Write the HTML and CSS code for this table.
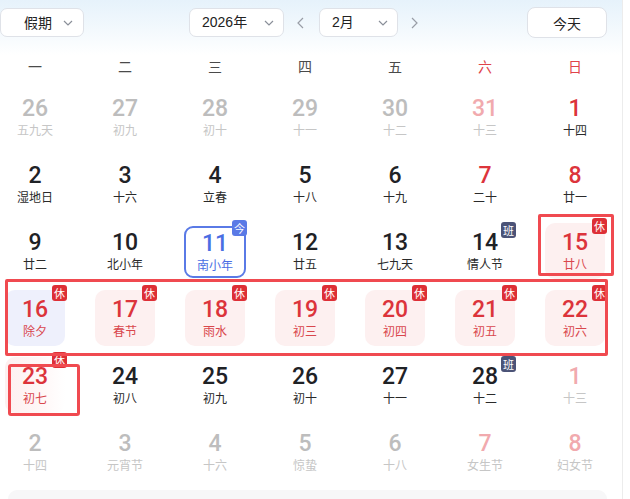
FILE: index.html
```html
<!DOCTYPE html>
<html lang="zh">
<head>
<meta charset="utf-8">
<link rel="stylesheet" href="styles.css">
</head>
<body>
<div class="app">
  <div class="toolbar">
    <div class="select holiday"><span>假期</span><svg class="chev" viewBox="0 0 10 6"><path d="M1 1l4 4 4-4"/></svg></div>
    <div class="select year"><span>2026年</span><svg class="chev" viewBox="0 0 10 6"><path d="M1 1l4 4 4-4"/></svg></div>
    <div class="arrow prev"><svg viewBox="0 0 7 12"><path d="M6 1L1 6l5 5"/></svg></div>
    <div class="select month"><span>2月</span><svg class="chev" viewBox="0 0 10 6"><path d="M1 1l4 4 4-4"/></svg></div>
    <div class="arrow next"><svg viewBox="0 0 7 12"><path d="M1 1l5 5-5 5"/></svg></div>
    <div class="spacer"></div>
    <div class="today-btn">今天</div>
  </div>

  <div class="weekdays">
    <div>一</div><div>二</div><div>三</div><div>四</div><div>五</div><div class="we">六</div><div class="we">日</div>
  </div>

  <div class="grid">
    <div class="cell other"><b>26</b><i>五九天</i></div>
    <div class="cell other"><b>27</b><i>初九</i></div>
    <div class="cell other"><b>28</b><i>初十</i></div>
    <div class="cell other"><b>29</b><i>十一</i></div>
    <div class="cell other"><b>30</b><i>十二</i></div>
    <div class="cell other wk"><b>31</b><i>十三</i></div>
    <div class="cell red"><b>1</b><i>十四</i></div>

    <div class="cell"><b>2</b><i>湿地日</i></div>
    <div class="cell"><b>3</b><i>十六</i></div>
    <div class="cell"><b>4</b><i>立春</i></div>
    <div class="cell"><b>5</b><i>十八</i></div>
    <div class="cell"><b>6</b><i>十九</i></div>
    <div class="cell red"><b>7</b><i>二十</i></div>
    <div class="cell red"><b>8</b><i>廿一</i></div>

    <div class="cell"><b>9</b><i>廿二</i></div>
    <div class="cell"><b>10</b><i>北小年</i></div>
    <div class="cell today"><b>11</b><i>南小年</i><span class="badge jin">今</span></div>
    <div class="cell"><b>12</b><i>廿五</i></div>
    <div class="cell"><b>13</b><i>七九天</i></div>
    <div class="cell"><b>14</b><i>情人节</i><span class="badge ban">班</span></div>
    <div class="cell rest"><b>15</b><i>廿八</i><span class="badge xiu">休</span></div>

    <div class="cell rest selected"><b>16</b><i>除夕</i><span class="badge xiu">休</span></div>
    <div class="cell rest"><b>17</b><i>春节</i><span class="badge xiu">休</span></div>
    <div class="cell rest"><b>18</b><i>雨水</i><span class="badge xiu">休</span></div>
    <div class="cell rest"><b>19</b><i>初三</i><span class="badge xiu">休</span></div>
    <div class="cell rest"><b>20</b><i>初四</i><span class="badge xiu">休</span></div>
    <div class="cell rest"><b>21</b><i>初五</i><span class="badge xiu">休</span></div>
    <div class="cell rest"><b>22</b><i>初六</i><span class="badge xiu">休</span></div>

    <div class="cell rest faint"><b>23</b><i>初七</i><span class="badge xiu">休</span></div>
    <div class="cell"><b>24</b><i>初八</i></div>
    <div class="cell"><b>25</b><i>初九</i></div>
    <div class="cell"><b>26</b><i>初十</i></div>
    <div class="cell"><b>27</b><i>十一</i></div>
    <div class="cell"><b>28</b><i>十二</i><span class="badge ban">班</span></div>
    <div class="cell other wk"><b>1</b><i>十三</i></div>

    <div class="cell other"><b>2</b><i>十四</i></div>
    <div class="cell other"><b>3</b><i>元宵节</i></div>
    <div class="cell other"><b>4</b><i>十六</i></div>
    <div class="cell other"><b>5</b><i>惊蛰</i></div>
    <div class="cell other"><b>6</b><i>十八</i></div>
    <div class="cell other wk"><b>7</b><i>女生节</i></div>
    <div class="cell other wk"><b>8</b><i>妇女节</i></div>
  </div>

  <div class="footer-box"></div>

  <div class="mark mark-row"></div>
  <div class="mark mark-15"></div>
  <div class="mark mark-23"></div>
</div>
</body>
</html>
```

FILE: styles.css
```css
* { box-sizing: border-box; }
html, body { margin: 0; padding: 0; background: #fff; }
body {
  font-family: "Noto Sans CJK SC", "Noto Sans", sans-serif;
  width: 630px;
  height: 499px;
  overflow: hidden;
}
.app {
  position: relative;
  width: 623px;
  height: 499px;
  border-right: 1px solid #ececec;
  background: linear-gradient(180deg, #e6f2fb 0px, #f3f9fd 30px, #ffffff 55px);
}
.toolbar {
  display: flex;
  align-items: center;
  padding-top: 8px;
  height: 37px;
}
.select {
  display: flex;
  align-items: center;
  height: 29px;
  border: 1px solid #dfe2e8;
  border-radius: 7px;
  background: #fff;
  font-size: 14px;
  color: #222;
  position: relative;
}
.select span { line-height: 27px; }
.chev {
  position: absolute;
  width: 10px;
  height: 6px;
  right: 9px;
  top: 11px;
  fill: none;
  stroke: #8a8f99;
  stroke-width: 1.2;
}
.holiday { width: 84px; padding-left: 23px; }
.holiday .chev { right: 10px; }
.year { width: 95px; margin-left: 105px; padding-left: 12px; }
.year span, .month span { font-family: "Liberation Sans", "Noto Sans CJK SC", sans-serif; }
.month { width: 79px; padding-left: 12px; }
.arrow {
  display: flex;
  align-items: center;
  justify-content: center;
  height: 29px;
}
.arrow svg { width: 7px; height: 12px; fill: none; stroke: #999da6; stroke-width: 1.2; }
.prev { width: 35px; padding-right: 3px; }
.next { width: 32px; }
.spacer { flex: 1; }
.today-btn {
  width: 80px;
  height: 31px;
  margin-right: 15px;
  border: 1px solid #dfe2e8;
  border-radius: 8px;
  background: #fff;
  font-size: 14px;
  color: #222;
  display: flex;
  align-items: center;
  justify-content: center;
}

.weekdays {
  display: grid;
  grid-template-columns: repeat(7, 60px);
  column-gap: 30px;
  padding-left: 5px;
  margin-top: 13px;
  height: 33px;
  align-items: center;
  font-size: 14px;
  color: #4a4a4a;
}
.weekdays div { text-align: center; line-height: 33px; }
.weekdays .we { color: #e0434a; }

.grid {
  display: grid;
  grid-template-columns: repeat(7, 60px);
  grid-auto-rows: 56px;
  column-gap: 30px;
  row-gap: 11px;
  padding-left: 5px;
  margin-top: 6px;
}
.cell {
  position: relative;
  display: flex;
  flex-direction: column;
  align-items: center;
  justify-content: center;
  border-radius: 10px;
  padding-bottom: 1px;
}
.cell b {
  font-family: "Roboto", "Liberation Sans", sans-serif;
  font-weight: 500;
  font-size: 23px;
  line-height: 25px;
  color: #1f2226;
}
.cell i {
  font-style: normal;
  font-size: 12px;
  line-height: 17px;
  color: #2a2a2a;
  white-space: nowrap;
}
.cell.red b { color: #dc343b; }
.cell.other b { color: #bdbdbd; }
.cell.other i { color: #c6c6c6; }
.cell.other.wk b { color: #f1aaae; }
.cell.rest { background: #fdf0f0; }
.cell.rest b { color: #dc343b; }
.cell.rest i { color: #d9474d; }
.cell.rest.selected { background: #eef0fc; }
.cell.rest.faint { background: linear-gradient(90deg, #fdf0f0 0%, #fff7f7 60%, #ffffff 100%); }
.cell.today {
  width: 62px;
  height: 52px;
  justify-self: center;
  align-self: center;
  border: 2px solid #5a7ae6;
  border-radius: 9px;
  margin-top: 2px;
}
.cell.today b { color: #4a6ee3; }
.cell.today i { color: #4a6ee3; }

.badge {
  position: absolute;
  width: 15px;
  height: 16px;
  border-radius: 3px;
  color: #fff;
  font-size: 11px;
  line-height: 16px;
  text-align: center;
  font-style: normal;
}
.badge.xiu { background: #dd2f36; top: -5px; right: -2px; }
.badge.ban { background: #4b5377; top: -1px; right: -1px; }
.badge.jin { background: #5a7ae6; top: -8px; right: -3px; }

.footer-box {
  margin: 10px 0 0 8px;
  width: 599px;
  height: 9px;
  border-radius: 10px 10px 0 0;
  background: #f7f7f8;
}

.mark {
  position: absolute;
  border: 3px solid #f04a50;
  border-radius: 2px;
  pointer-events: none;
}
.mark-row { left: 5px; top: 279px; width: 603px; height: 77px; }
.mark-15 { left: 538px; top: 214px; width: 76px; height: 62px; }
.mark-23 { left: 8px; top: 364px; width: 72px; height: 52px; border-radius: 3px; }
```
